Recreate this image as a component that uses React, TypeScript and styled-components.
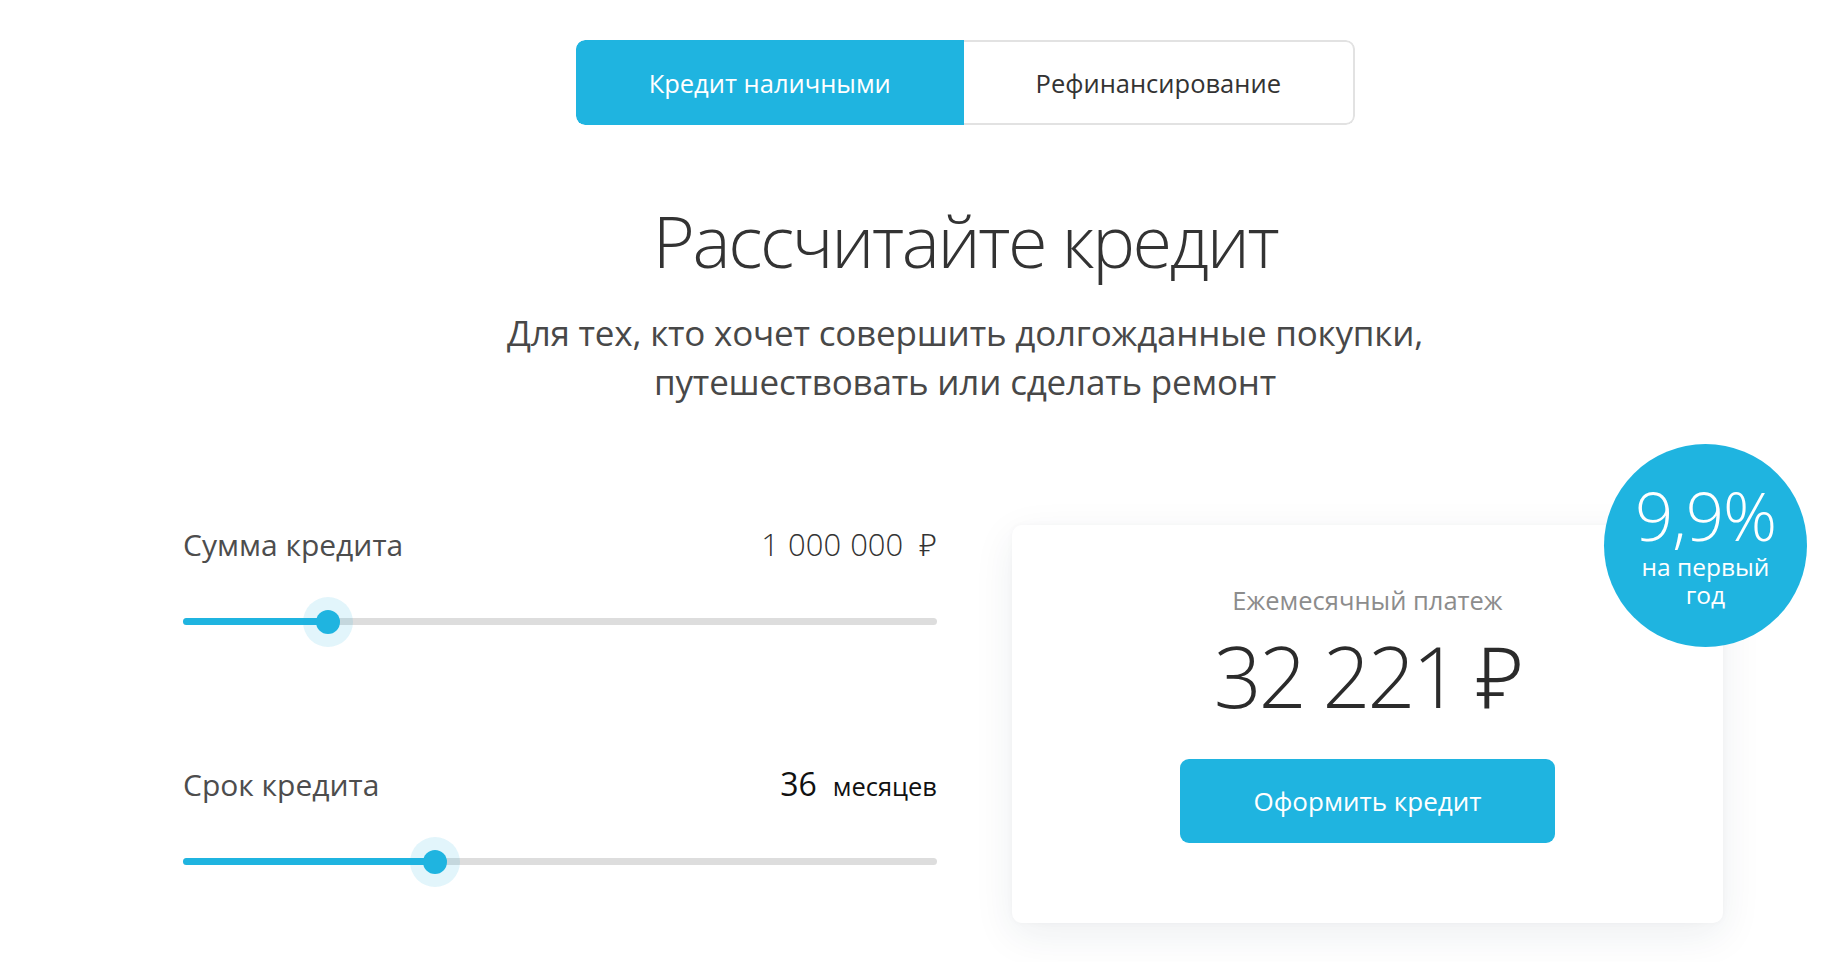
import { FC } from 'react';
import styled, { createGlobalStyle, css } from 'styled-components';

const GlobalStyle = createGlobalStyle`
  html, body {
    margin: 0;
    padding: 0;
    background: #ffffff;
    font-family: 'Open Sans', 'Noto Sans', sans-serif;
    color: #333333;
  }
`;

const BLUE = '#1fb4e0';

const Page = styled.div`
  width: 1832px;
  min-height: 962px;
  box-sizing: border-box;
  padding: 40px 0 0 183px;
`;

const Header = styled.header`
  width: 1564px;
  display: flex;
  flex-direction: column;
  align-items: center;
`;

const Tabs = styled.div`
  display: flex;
  width: 779px;
  height: 85px;
  border-radius: 9px;
  overflow: hidden;
  box-sizing: border-box;
`;

const Tab = styled.button<{ $active?: boolean }>`
  flex: 1;
  border: none;
  font-family: 'Open Sans', sans-serif;
  font-size: 25.5px;
  font-weight: 400;
  cursor: pointer;
  ${({ $active }) =>
    $active
      ? css`
          background: ${BLUE};
          color: #ffffff;
          border-radius: 9px 0 0 9px;
        `
      : css`
          background: #ffffff;
          color: #333333;
          border: 2px solid #e2e2e2;
          border-left: none;
          border-radius: 0 9px 9px 0;
        `}
`;

const Title = styled.h1`
  margin: 72px 0 0;
  font-size: 72px;
  font-weight: 300;
  line-height: 1.2;
  color: #333333;
  letter-spacing: -2.4px;
`;

const Subtitle = styled.p`
  margin: 25px 0 0;
  font-size: 35px;
  font-weight: 400;
  line-height: 49px;
  color: #484848;
  text-align: center;
  letter-spacing: -0.2px;
`;

const Calculator = styled.section`
  display: flex;
  gap: 75px;
  margin-top: 119px;
  align-items: flex-start;
`;

const Sliders = styled.div`
  width: 754px;
  display: flex;
  flex-direction: column;
  gap: 137px;
  margin-top: -2px;
`;

const SliderBlock = styled.div`
  display: flex;
  flex-direction: column;
  gap: 53px;
`;

const SliderHead = styled.div`
  display: flex;
  justify-content: space-between;
  align-items: baseline;
`;

const Label = styled.span`
  font-size: 30px;
  font-weight: 400;
  color: #4d4d4d;
`;

const Amount = styled.span`
  font-size: 31px;
  font-weight: 300;
  color: #333333;
  word-spacing: 1px;
`;

const Currency = styled.span`
  margin-left: 16px;
`;

const Months = styled.span`
  font-size: 32px;
  font-weight: 400;
  color: #111111;
`;

const MonthsUnit = styled.span`
  font-size: 25.5px;
  font-weight: 400;
  color: #111111;
  margin-left: 16px;
`;

const Track = styled.div`
  position: relative;
  height: 7px;
  border-radius: 4px;
  background: #dddddd;
`;

const Fill = styled.div`
  height: 100%;
  border-radius: 4px;
  background: ${BLUE};
`;

const Thumb = styled.div`
  position: absolute;
  top: 50%;
  width: 24px;
  height: 24px;
  border-radius: 50%;
  background: ${BLUE};
  transform: translate(-50%, -50%);
  box-shadow: 0 0 0 13px rgba(31, 180, 224, 0.13);
`;

const Card = styled.div`
  position: relative;
  width: 711px;
  height: 398px;
  box-sizing: border-box;
  border-radius: 10px;
  background: #ffffff;
  box-shadow: 0 12px 40px rgba(30, 50, 80, 0.08), 0 0 6px rgba(0, 0, 0, 0.03);
  display: flex;
  flex-direction: column;
  align-items: center;
  padding-top: 58px;
`;

const CardLabel = styled.div`
  font-size: 25.5px;
  font-weight: 400;
  color: #8c8c8c;
`;

const Payment = styled.div`
  margin-top: 9px;
  font-size: 84px;
  font-weight: 300;
  line-height: 1.2;
  color: #2b2b2b;
  letter-spacing: -3px;
`;

const ApplyButton = styled.button`
  margin-top: 32px;
  width: 375px;
  height: 84px;
  border: none;
  border-radius: 9px;
  background: ${BLUE};
  color: #ffffff;
  font-family: 'Open Sans', sans-serif;
  font-size: 26px;
  font-weight: 400;
  cursor: pointer;
`;

const Badge = styled.div`
  position: absolute;
  left: 592px;
  top: -81px;
  width: 203px;
  height: 203px;
  border-radius: 50%;
  background: ${BLUE};
  color: #ffffff;
  display: flex;
  flex-direction: column;
  align-items: center;
  justify-content: center;
  text-align: center;
`;

const Rate = styled.div`
  font-size: 67px;
  font-weight: 300;
  line-height: 1;
  letter-spacing: -1px;
`;

const RateNote = styled.div`
  font-size: 24.5px;
  font-weight: 400;
  line-height: 28px;
  margin-top: 4px;
`;

interface SliderProps {
  label: string;
  percent: number;
  value: React.ReactNode;
}

const Slider: FC<SliderProps> = ({ label, percent, value }) => (
  <SliderBlock>
    <SliderHead>
      <Label>{label}</Label>
      {value}
    </SliderHead>
    <Track>
      <Fill style={{ width: `${percent}%` }} />
      <Thumb style={{ left: `${percent}%` }} />
    </Track>
  </SliderBlock>
);

const App: FC = () => {
  return (
    <Page>
      <GlobalStyle />
      <Header>
        <Tabs>
          <Tab $active>Кредит наличными</Tab>
          <Tab>Рефинансирование</Tab>
        </Tabs>
        <Title>Рассчитайте кредит</Title>
        <Subtitle>
          Для тех, кто хочет совершить долгожданные покупки,
          <br />
          путешествовать или сделать ремонт
        </Subtitle>
      </Header>
      <Calculator>
        <Sliders>
          <Slider
            label="Сумма кредита"
            percent={19.2}
            value={
              <Amount>
                1 000 000<Currency>₽</Currency>
              </Amount>
            }
          />
          <Slider
            label="Срок кредита"
            percent={33.4}
            value={
              <span>
                <Months>36</Months>
                <MonthsUnit>месяцев</MonthsUnit>
              </span>
            }
          />
        </Sliders>
        <Card>
          <Badge>
            <Rate>9,9%</Rate>
            <RateNote>
              на первый
              <br />
              год
            </RateNote>
          </Badge>
          <CardLabel>Ежемесячный платеж</CardLabel>
          <Payment>32 221 ₽</Payment>
          <ApplyButton>Оформить кредит</ApplyButton>
        </Card>
      </Calculator>
    </Page>
  );
};

export default App;
